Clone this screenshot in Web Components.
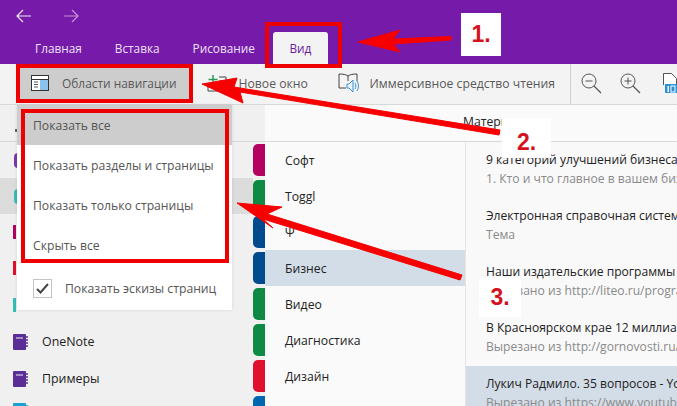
<!DOCTYPE html>
<html lang="ru">
<head>
<meta charset="utf-8">
<title>OneNote</title>
<style>
  html, body { margin: 0; padding: 0; }
  body { width: 677px; height: 406px; overflow: hidden; position: relative; font-family: "Open Sans", "Noto Sans", sans-serif; }
</style>
</head>
<body>
<one-titlebar></one-titlebar>
<one-toolbar></one-toolbar>
<one-panes></one-panes>
<one-menu></one-menu>
<one-callouts></one-callouts>

<script>
const FONT = `"Open Sans", "Noto Sans", sans-serif`;

class OneTitlebar extends HTMLElement {
  constructor() {
    super();
    this.attachShadow({ mode: 'open' });
    this.shadowRoot.innerHTML = `
      <style>
        :host { display: block; height: 64px; background: #761ba9; font: 11.8px ${FONT}; color: #eee2f4; }
        .nav { display: flex; height: 32px; padding-left: 16px; gap: 33px; align-items: center; }
        .nav svg { display: block; }
        .tabs { display: flex; height: 32px; padding-left: 35px; }
        .tab { display: flex; align-items: center; }
        .tab + .tab { margin-left: 33px; }
        .tab.on { background: #f3f3f3; color: #6a1a9a; margin-left: 18px; width: 55px; justify-content: center; border-radius: 3px 3px 0 0; }
      </style>
      <div class="nav">
        <svg width="15" height="14" viewBox="0 0 15 14" fill="none" stroke="#f1e6f7" stroke-width="1.2"><path d="M15 7H1M7 1 1 7l6 6"/></svg>
        <svg width="15" height="14" viewBox="0 0 15 14" fill="none" stroke="#c793e0" stroke-width="1.2"><path d="M0 7h14M8 1l6 6-6 6"/></svg>
      </div>
      <div class="tabs">
        <span class="tab">Главная</span>
        <span class="tab">Вставка</span>
        <span class="tab">Рисование</span>
        <span class="tab on">Вид</span>
      </div>`;
  }
}

class OneToolbar extends HTMLElement {
  constructor() {
    super();
    this.attachShadow({ mode: 'open' });
    this.shadowRoot.innerHTML = `
      <style>
        :host { display: flex; box-sizing: border-box; height: 41px; background: #f3f3f3; border-bottom: 1px solid #d8d8d8; font: 12.2px ${FONT}; color: #595959; white-space: nowrap; overflow: hidden; }
        .btn { display: flex; align-items: center; height: 32px; margin-top: 3px; }
        .btn svg { display: block; flex: none; }
        .areas { background: #cdcdcd; width: 169px; margin-left: 20px; padding-left: 11px; box-sizing: border-box; font-size: 11.9px; }
        .areas svg { margin-right: 13px; }
        .win { margin-left: 18px; width: 101px; }
        .win svg { margin-right: 12px; }
        .read { margin-left: 30px; width: 218px; }
        .read svg { margin-right: 11px; }
        .sep { width: 1px; height: 40px; background: #d0d0d0; margin-left: 15px; }
        .zoom { margin-left: 10px; }
        .zoom + .zoom { margin-left: 18px; }
        .file { margin-left: 22px; }
      </style>
      <div class="btn areas">
        <svg width="18" height="16" viewBox="0 0 18 16"><rect x=".5" y=".5" width="17" height="15" fill="#fff" stroke="#333"/><rect x="1" y="4" width="16" height="1" fill="#333"/><rect x="9" y="5" width="8" height="10" fill="#8cc3ee"/><path d="M3 7h4M3 9.500h4M3 12h4" stroke="#555"/></svg>
        Области навигации
      </div>
      <div class="btn win">
        <svg width="20" height="18" viewBox="0 0 20 18"><path d="M6 1v9M1.500 5.500h9" stroke="#2d9a58" stroke-width="1.500"/><path d="M12 3h7v10M1 9v8h15v-4M12 7h6" fill="none" stroke="#444"/></svg>
        Новое окно
      </div>
      <div class="btn read">
        <svg width="21" height="20" viewBox="0 0 21 20" fill="none"><path d="M10 3C8 1.500 5 1 1 1v14h7M10 3c2-1.500 5-2 9-2v7M10 3v5" stroke="#444"/><path d="M9 11h2l4-4v12l-4-4H9z" fill="#e8f2fa" stroke="#3f93d4"/><path d="M17 10c1 1.500 1 4.500 0 6M19 8c2 3 2 7 0 10" stroke="#3f93d4"/></svg>
        Иммерсивное средство чтения
      </div>
      <div class="sep"></div>
      <div class="btn zoom">
        <svg width="21" height="21" viewBox="0 0 21 21" fill="none" stroke="#555"><circle cx="8" cy="8" r="7"/><path d="M4.500 8h7"/><path d="M13 13l7 7" stroke-width="1.300"/></svg>
      </div>
      <div class="btn zoom">
        <svg width="21" height="21" viewBox="0 0 21 21" fill="none" stroke="#555"><circle cx="8" cy="8" r="7"/><path d="M4.500 8h7M8 4.500v7"/><path d="M13 13l7 7" stroke-width="1.300"/></svg>
      </div>
      <div class="btn file">
        <svg width="14" height="20" viewBox="0 0 14 20"><path d="M.5 12V.5h8l5 5V12" fill="#fff" stroke="#555"/><rect x="2" y="11" width="12" height="9" fill="#2f92d6"/><rect x="4.500" y="13" width="1.500" height="6" fill="#fff"/><rect x="8" y="13" width="4" height="6" fill="none" stroke="#fff"/></svg>
      </div>`;
  }
}

class OneNavItem extends HTMLElement {
  constructor() {
    super();
    this.attachShadow({ mode: 'open' });
    this.shadowRoot.innerHTML = `
      <style>
        :host { display: flex; align-items: center; height: 36px; padding-left: 13px; font-size: 12.4px; color: #222; white-space: nowrap; }
        :host([selected]) { background: #dcdcdc; }
        .book { width: 16px; height: 16px; margin-right: 13px; flex: none; display: block; }
        .bar { width: 3px; height: 14px; background: var(--c); flex: none; }
        .ring { width: 9px; height: 15px; margin-left: 1px; border: 3px solid var(--c); border-radius: 4px; flex: none; box-sizing: border-box; }
      </style>
      <span id="icon" style="display:flex"></span><slot></slot>`;
  }

  connectedCallback() {
    const kind = this.getAttribute('kind');
    const color = this.getAttribute('color');
    const icon = this.shadowRoot.getElementById('icon');
    icon.style.setProperty('--c', color);
    if (kind === 'bar') icon.innerHTML = '<span class="bar"></span>';
    else if (kind === 'ring') icon.innerHTML = '<span class="ring"></span>';
    else icon.innerHTML = `<svg class="book" viewBox="0 0 16 16"><rect y="0" width="13" height="16" rx="1" fill="${color}"/><path d="M3 4h7" stroke="#f0f0f0"/><path d="M13 3h2M13 6h2M13 9h2M13 12h2" stroke="${color}" stroke-width="1.500"/></svg>`;
  }
}

class OneSectionRow extends HTMLElement {
  constructor() {
    super();
    this.attachShadow({ mode: 'open' });
    this.shadowRoot.innerHTML = `
      <style>
        :host { display: flex; height: 36px; font-size: 12.2px; color: #222; background: #f0f0f0; }
        .tab { width: 12px; margin: 2px 0 2px; box-sizing: border-box; border-radius: 5px 0 0 5px; flex: none; }
        .name { flex: 1; display: flex; align-items: center; padding-left: 20px; background: #fafafa; padding-top: 1px; }
        :host([selected]) .name { background: #d3dde8; }
      </style>
      <div class="tab"></div>
      <div class="name"><slot></slot></div>`;
  }

  connectedCallback() {
    this.shadowRoot.querySelector('.tab').style.background = this.getAttribute('color');
  }
}

class OnePageRow extends HTMLElement {
  constructor() {
    super();
    this.attachShadow({ mode: 'open' });
    this.shadowRoot.innerHTML = `
      <style>
        :host { display: block; height: 56px; box-sizing: border-box; padding: 9px 0 0 20px; font-size: 12.1px; line-height: 18px; white-space: nowrap; overflow: hidden; }
        :host([selected]) { background: #d3dde8; }
        .sub { color: #8a8a8a; margin-top: 1px; }
        .title { color: #222; }
      </style>
      <div class="title"><slot name="title"></slot></div>
      <div class="sub"><slot name="sub"></slot></div>`;
  }
}

class OnePanes extends HTMLElement {
  constructor() {
    super();
    this.attachShadow({ mode: 'open' });
    this.shadowRoot.innerHTML = `
      <style>
        :host { display: grid; grid-template-columns: 253px 12px 200px 212px; grid-template-rows: 37px 1fr; height: 301px; overflow: hidden; font: 12.2px ${FONT}; background: #f0f0f0; }
        .head-l { grid-column: 1 / 3; border-bottom: 1px solid #d8d8d8; background: #f0f0f0; position: relative; }
        .head-l i { position: absolute; left: 15px; top: 24px; width: 2px; height: 3px; background: #666; }
        .head-r { grid-column: 3 / 5; border-bottom: 1px solid #d8d8d8; background: #fafafa; padding-left: 198px; line-height: 34px; color: #222; white-space: nowrap; }
        .nav { display: block; overflow: hidden; }
        .sections { grid-column: 2 / 4; overflow: hidden; }
        .pages { border-left: 1px solid #e4e4e4; background: #f9f9f9; overflow: hidden; min-width: 0; }
      </style>
      <div class="head-l"><i></i></div>
      <div class="head-r">Материалы</div>
      <div class="nav">
        <one-nav-item kind="ring" color="#7a3aa8"></one-nav-item>
        <one-nav-item kind="ring" color="#36bdb4" selected></one-nav-item>
        <one-nav-item kind="bar" color="#b5005f"></one-nav-item>
        <one-nav-item kind="bar" color="#e0102f"></one-nav-item>
        <one-nav-item kind="bar" color="#36bdb4" style="height:37px"></one-nav-item>
        <one-nav-item kind="book" color="#5b2d96" style="height:37px">OneNote</one-nav-item>
        <one-nav-item kind="book" color="#5b2d96" style="height:37px">Примеры</one-nav-item>
        <one-nav-item kind="book" color="#1b9fd0" style="height:28px"></one-nav-item>
      </div>
      <div class="sections">
        <one-section-row color="#b5005f">Софт</one-section-row>
        <one-section-row color="#0e8a45">Toggl</one-section-row>
        <one-section-row color="#004b8d">Ψ</one-section-row>
        <one-section-row color="#004b8d" selected>Бизнес</one-section-row>
        <one-section-row color="#0e8a45">Видео</one-section-row>
        <one-section-row color="#0e8a45">Диагностика</one-section-row>
        <one-section-row color="#e0102f">Дизайн</one-section-row>
        <one-section-row color="#0067b0"></one-section-row>
      </div>
      <div class="pages">
        <one-page-row><span slot="title">9 категорий улучшений бизнеса</span><span slot="sub">1. Кто и что главное в вашем бизнесе</span></one-page-row>
        <one-page-row><span slot="title">Электронная справочная система</span><span slot="sub">Тема</span></one-page-row>
        <one-page-row><span slot="title">Наши издательские программы</span><span slot="sub">Вырезано из http://liteo.ru/programs</span></one-page-row>
        <one-page-row><span slot="title">В Красноярском крае 12 миллиардов</span><span slot="sub">Вырезано из http://gornovosti.ru/</span></one-page-row>
        <one-page-row selected><span slot="title">Лукич Радмило. 35 вопросов - YouTube</span><span slot="sub">Вырезано из https://www.youtube.com/</span></one-page-row>
      </div>`;
  }
}

class OneMenu extends HTMLElement {
  constructor() {
    super();
    this.attachShadow({ mode: 'open' });
    this.shadowRoot.innerHTML = `
      <style>
        :host { position: absolute; left: 17px; top: 105px; width: 215px; height: 205px; background: #fff; box-shadow: 0 0 3px rgba(0,0,0,.12); font: 12.2px ${FONT}; color: #555; white-space: nowrap; }
        .item { display: flex; align-items: center; height: 40px; padding-left: 16px; }
        .item.on { background: #cdcdcd; }
        .check { display: flex; align-items: center; height: 45px; padding-left: 16px; margin-top: 1px; }
        .box { width: 19px; height: 19px; box-sizing: border-box; border: 1px solid #c4c4c4; margin-right: 13px; display: flex; align-items: center; justify-content: center; }
      </style>
      <div class="item on">Показать все</div>
      <div class="item">Показать разделы и страницы</div>
      <div class="item">Показать только страницы</div>
      <div class="item">Скрыть все</div>
      <div class="check">
        <span class="box"><svg width="13" height="11" viewBox="0 0 13 11" fill="none" stroke="#444" stroke-width="2"><path d="M1 6l3.500 3.500L12 1"/></svg></span>
        Показать эскизы страниц
      </div>`;
  }
}

class OneCallouts extends HTMLElement {
  constructor() {
    super();
    this.attachShadow({ mode: 'open' });
    this.shadowRoot.innerHTML = `
      <style>
        :host { position: absolute; left: 0; top: 0; width: 677px; height: 406px; display: block; pointer-events: none; }
        svg { position: absolute; left: 0; top: 0; }
        .num { position: absolute; background: #fff; color: #d4121e; font: bold 23px "Liberation Sans", Arial, sans-serif; display: flex; align-items: center; justify-content: center; box-sizing: border-box; }
      </style>
      <svg width="677" height="406" viewBox="0 0 677 406" fill="none">
        <g stroke="#ee0000" stroke-width="4">
          <rect x="267" y="24" width="73" height="42"/>
          <rect x="18" y="66" width="173" height="35"/>
          <rect x="23" y="111" width="204" height="150"/>
        </g>
        <g fill="#f60000" stroke="#f60000" stroke-linejoin="round">
          <path d="M358 42 400 30 393 39 451 36.500 451 40 393 44 400 52z"/>
          <path d="M202 84 237 78 234 87 500 130 499 135 240 92 243 103z"/>
          <path d="M237 203 282 207 267 214 462 275 460 280 263 219 273 228z"/>
        </g>
      </svg>
      <div class="num" style="left:461px;top:13px;width:40px;height:43px">1.</div>
      <div class="num" style="left:502px;top:118px;width:49px;height:40px;padding-top:8px">2.</div>
      <div class="num" style="left:479px;top:278px;width:42px;height:39px">3.</div>`;
  }
}

customElements.define('one-titlebar', OneTitlebar);
customElements.define('one-toolbar', OneToolbar);
customElements.define('one-nav-item', OneNavItem);
customElements.define('one-section-row', OneSectionRow);
customElements.define('one-page-row', OnePageRow);
customElements.define('one-panes', OnePanes);
customElements.define('one-menu', OneMenu);
customElements.define('one-callouts', OneCallouts);
</script>
</body>
</html>
